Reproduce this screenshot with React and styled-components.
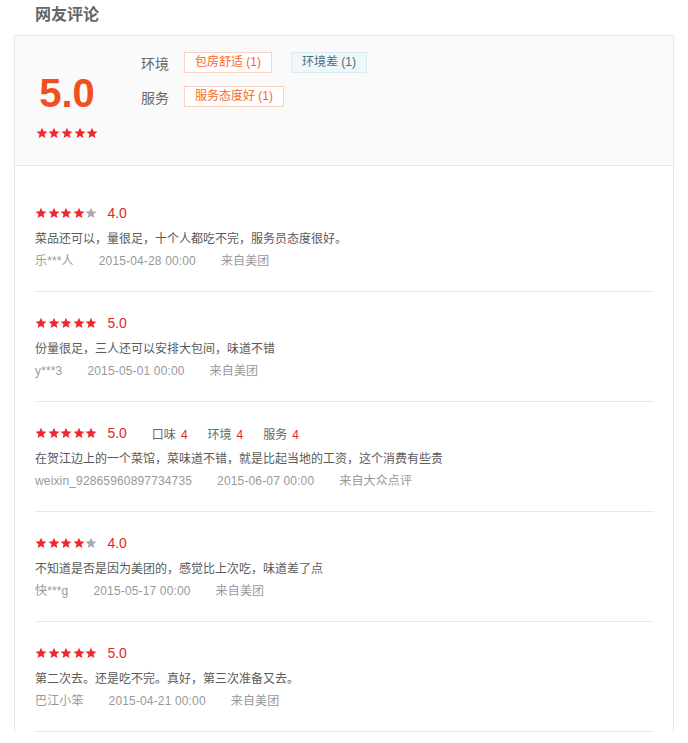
import React from "react";
import styled, { createGlobalStyle } from "styled-components";

const GlobalStyle = createGlobalStyle`
  body {
    margin: 0;
    background: #fff;
    font-family: "Liberation Sans", "Noto Sans CJK SC", sans-serif;
  }
`;

const reviews = [
  {
    score: 4,
    text: "菜品还可以，量很足，十个人都吃不完，服务员态度很好。",
    user: "乐***人",
    date: "2015-04-28 00:00",
    from: "来自美团",
  },
  {
    score: 5,
    text: "份量很足，三人还可以安排大包间，味道不错",
    user: "y***3",
    date: "2015-05-01 00:00",
    from: "来自美团",
  },
  {
    score: 5,
    sub: [
      ["口味", 4],
      ["环境", 4],
      ["服务", 4],
    ],
    text: "在贺江边上的一个菜馆，菜味道不错，就是比起当地的工资，这个消费有些贵",
    user: "weixin_92865960897734735",
    date: "2015-06-07 00:00",
    from: "来自大众点评",
  },
  {
    score: 4,
    text: "不知道是否是因为美团的，感觉比上次吃，味道差了点",
    user: "快***g",
    date: "2015-05-17 00:00",
    from: "来自美团",
  },
  {
    score: 5,
    text: "第二次去。还是吃不完。真好，第三次准备又去。",
    user: "巴江小笨",
    date: "2015-04-21 00:00",
    from: "来自美团",
  },
];

const Star = ({ on }) => (
  <svg width="12" height="12" viewBox="0 0 24 24">
    <path
      d="M12 1.5l3.1 7.2 7.8.7-5.9 5.2 1.8 7.6L12 18.2l-6.8 4 1.8-7.6L1.1 9.4l7.8-.7z"
      fill={on ? "#f0282d" : "#aaaaaa"}
    />
  </svg>
);

const Stars = ({ n }) => (
  <StarRow>
    {[1, 2, 3, 4, 5].map((i) => (
      <Star key={i} on={i <= n} />
    ))}
  </StarRow>
);

const App = () => {
  return (
    <Page>
      <GlobalStyle />
      <Title>网友评论</Title>
      <Box>
        <Summary>
          <ScoreCol>
            <BigScore>5.0</BigScore>
            <Stars n={5} />
          </ScoreCol>
          <TagTable>
            <TagRow>
              <TagLabel>环境</TagLabel>
              <Tag>包房舒适 (1)</Tag>
              <Tag $bad>环境差 (1)</Tag>
            </TagRow>
            <TagRow>
              <TagLabel>服务</TagLabel>
              <Tag>服务态度好 (1)</Tag>
            </TagRow>
          </TagTable>
        </Summary>
        <List>
          {reviews.map((r, i) => (
            <Review key={i}>
              <RateLine>
                <Stars n={r.score} />
                <RateNum>{r.score}.0</RateNum>
                {r.sub &&
                  r.sub.map(([k, v]) => (
                    <SubRate key={k}>
                      {k}
                      <em>{v}</em>
                    </SubRate>
                  ))}
              </RateLine>
              <Content>{r.text}</Content>
              <Meta>
                <span>{r.user}</span>
                <span>{r.date}</span>
                <span>{r.from}</span>
              </Meta>
            </Review>
          ))}
        </List>
      </Box>
    </Page>
  );
};

const Page = styled.div`
  padding: 0 14px;
  width: 660px;
`;

const Title = styled.h3`
  margin: 0;
  padding: 4px 0 0 21px;
  height: 31px;
  line-height: 22px;
  font-size: 16px;
  font-weight: bold;
  color: #666;
`;

const Box = styled.div`
  border: 1px solid #e8e8e8;
  border-bottom: none;
`;

const Summary = styled.div`
  display: flex;
  height: 129px;
  background: #fafafa;
  border-bottom: 1px solid #e8e8e8;
`;

const ScoreCol = styled.div`
  width: 64px;
  padding-left: 20px;
  margin-right: 42px;
  display: flex;
  flex-direction: column;
  align-items: center;
`;

const BigScore = styled.div`
  margin-top: 33px;
  height: 48px;
  line-height: 48px;
  font-size: 40px;
  font-weight: bold;
  color: #f0501e;
`;

const StarRow = styled.span`
  display: inline-flex;
  gap: 0.6px;
  align-items: center;
  svg {
    display: block;
  }
  ${BigScore} + & {
    margin-top: 10px;
  }
`;

const TagTable = styled.div`
  padding-top: 16px;
  display: flex;
  flex-direction: column;
  gap: 13px;
`;

const TagRow = styled.div`
  display: flex;
  align-items: center;
  gap: 19px;
  height: 21px;
`;

const TagLabel = styled.span`
  flex-shrink: 0;
  white-space: nowrap;
  width: 28px;
  margin-right: -4px;
  font-size: 14px;
  color: #666;
`;

const Tag = styled.span`
  height: 19px;
  line-height: 19px;
  padding: 0 10px;
  white-space: nowrap;
  font-size: 12px;
  border: 1px solid ${(p) => (p.$bad ? "#d8ecf3" : "#f9d3bf")};
  background: ${(p) => (p.$bad ? "#eef7fa" : "#fff")};
  color: ${(p) => (p.$bad ? "#4d6b78" : "#f5692a")};
`;

const List = styled.div`
  padding: 16px 19px 0 20px;
`;

const Review = styled.div`
  padding: 21px 0 20px;
  border-bottom: 1px solid #e8e8e8;
`;

const RateLine = styled.div`
  display: flex;
  align-items: center;
  height: 20px;
`;

const RateNum = styled.span`
  margin-left: 10px;
  font-size: 14px;
  color: #e4262b;
`;

const SubRate = styled.span`
  font-size: 12px;
  color: #666;
  margin-left: 20px;
  ${RateNum} + & {
    margin-left: 25px;
  }
  em {
    font-style: normal;
    color: #e4262b;
    margin-left: 5px;
  }
`;

const Content = styled.p`
  margin: 6px 0 0;
  line-height: 20px;
  font-size: 12px;
  color: #5a5a5a;
`;

const Meta = styled.div`
  margin-top: 2px;
  display: flex;
  gap: 25px;
  line-height: 20px;
  font-size: 12px;
  letter-spacing: 0.15px;
  color: #999;
`;

export default App;
